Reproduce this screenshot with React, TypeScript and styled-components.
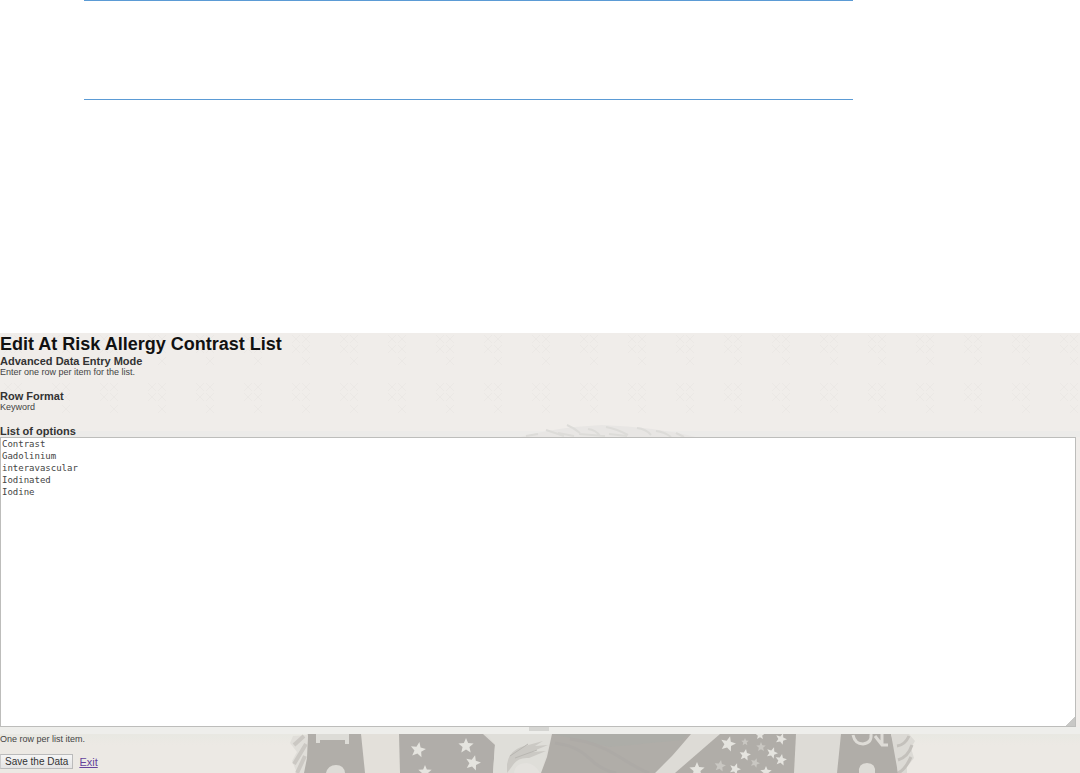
import React from "react";
import styled, { createGlobalStyle } from "styled-components";

const GlobalStyle = createGlobalStyle`
  *, *::before, *::after { box-sizing: border-box; }
  body {
    margin: 0;
    background: #fff;
    color: #222;
    font-family: "Liberation Sans", Arial, sans-serif;
    font-size: 9px;
  }
`;

const Page = styled.div`
  display: flex;
  flex-direction: column;
  min-height: 100vh;
`;

const PageHeader = styled.header`
  height: 100px;
  margin: 0 21% 233px 84px;
  border-top: 1px solid #5b9bd5;
  border-bottom: 1px solid #5b9bd5;
`;

const Editor = styled.form`
  flex: 1;
  display: flex;
  flex-direction: column;
  background: #f0edea;
`;

const Intro = styled.div`
  position: relative;
  overflow: hidden;
  isolation: isolate;
  padding-top: 1px;
`;

const Title = styled.h1`
  margin: 0;
  font-size: 18px;
  line-height: 21px;
  color: #111;
`;

const Section = styled.section`
  margin-bottom: 12px;
`;

const Subtitle = styled.h2`
  margin: 0;
  font-size: 11px;
  line-height: 12px;
  color: #333;
`;

const Label = styled.label`
  display: block;
  font-size: 11px;
  font-weight: bold;
  line-height: 12px;
  color: #333;
`;

const Note = styled.p`
  margin: 0;
  font-size: 9px;
  line-height: 11px;
  color: #444;
`;

const Options = styled.textarea`
  display: block;
  width: calc(100% - 4px);
  height: 290px;
  padding: 0 1px;
  border: 1px solid #bdbdbb;
  border-radius: 0;
  outline: 0;
  background: #fff;
  color: #444;
  font-family: "DejaVu Sans Mono", monospace;
  font-size: 9px;
  line-height: 12px;
  resize: vertical;

  &::-webkit-resizer {
    background: linear-gradient(135deg, transparent 70%, #c8c8c6 70%);
  }
`;

const Footer = styled.footer`
  position: relative;
  overflow: hidden;
  isolation: isolate;
  flex: 1;
  min-height: 46px;
  padding-top: 7px;
  background: linear-gradient(#eeeeeb 0 7px, #e8e8e2 7px, #ece9e4 18px);
`;

const Actions = styled.div`
  display: flex;
  align-items: center;
  gap: 6px;
  margin-top: 9px;
`;

const SaveButton = styled.button`
  height: 15px;
  padding: 0 4px;
  border: 1px solid #bbb;
  border-left-color: #ccc;
  background: linear-gradient(#f5f5f5, #e4e4e4);
  color: #333;
  font: 10px/12px "Liberation Sans", Arial, sans-serif;
`;

const ExitLink = styled.a`
  color: #65439b;
  font-size: 11px;
  line-height: 12px;
`;

const SealArt = styled.svg<{ $edge: "top" | "bottom" }>`
  position: absolute;
  z-index: -1;
  left: 0;
  ${({ $edge }) => ($edge === "top" ? "bottom: 0;" : "top: 0;")}
  pointer-events: none;
`;

const stars = [
  [418, 750, 8, 10], [466, 746, 8, 0], [473, 763, 8, 15], [425, 772, 7, 0],
  [728, 744, 8, 15], [745, 755, 6, 10], [697, 770, 8, 0], [735, 769, 6, 20],
  [772, 753, 6, 20], [781, 739, 6, 20], [760, 735, 5, 0], [781, 760, 6, 10],
  [766, 772, 6, 0],
];
const faintStars = [[720, 766, 6, 10], [755, 763, 5, 20], [761, 747, 5, 0], [745, 742, 4, 0]];

function starPoints([cx, cy, size, turn]: number[]) {
  return Array.from({ length: 10 }, (_, i) => {
    const radius = i % 2 ? size * 0.45 : size;
    const angle = ((i * 36 - 90 + turn) * Math.PI) / 180;
    return `${cx + radius * Math.cos(angle)},${cy + radius * Math.sin(angle)}`;
  }).join(" ");
}

function SealCrest() {
  return (
    <SealArt $edge="top" width="100%" height="104" aria-hidden="true">
      <defs>
        <pattern id="weave" width="48" height="48" patternUnits="userSpaceOnUse" x="2" y="0">
          <path
            d="M2 2l8 8M10 2l-8 8M12 2l8 8M20 2l-8 8M2 12l8 8M10 12l-8 8M12 12l8 8M20 12l-8 8M12 24l8 8M20 24l-8 8"
            stroke="#ebe8e5" fill="none"
          />
        </pattern>
      </defs>
      <rect width="100%" height="98" fill="url(#weave)" />
      <rect y="98" width="100%" height="6" fill="#ecebe9" />
      <g transform="translate(0 -333)">
        <path d="M520 437Q548 430 574 427L602 425Q655 427 696 437Z" fill="#e8e6e4" />
        <path
          d="M526 436l12-2M546 430l18 6M567 425q7 3 13 8M588 429q8 1 12 7M606 427q11 2 22 8M637 428q9 1 14 7M656 431q9 1 15 6M676 433l8 4M558 433l16 3M579 434l26 2M609 434l18 2"
          stroke="#dddcd9" strokeWidth="2" fill="none"
        />
      </g>
    </SealArt>
  );
}

function SealBase() {
  return (
    <SealArt $edge="bottom" width="1080" height="46" viewBox="0 727 1080 46" aria-hidden="true">
      <path d="M307 734H891L897 773H304Z" fill="#dddbd6" />
      <path d="M361 734H400L402 773H365Z" fill="#e3e0da" />
      <path d="M308 734H361L365 773H302L306 758Z" fill="#b1aea9" />
      <path d="M316 734H349V744H345V740H320V743H316Z" fill="#dddcd7" />
      <path d="M326 773q2-8 10-8t9 8Z" fill="#dedcd7" />
      <path d="M399 734H483L495 745L493 773H400Z" fill="#b0ada9" />
      <path d="M486 734H552L547 751L541 773H493L495 744Z" fill="#dfded9" />
      <path d="M507 765q1-13 14-18l22-6-8 5 13-1-17 7 15-1-17 7q-11-1-16 7l-6 8Z" fill="#cbc9c4" />
      <path d="M510 756l18-12M515 758l22-8" stroke="#b9b7b2" fill="none" />
      <path d="M514 773q1-10 13-10 8 1 13 10Z" fill="#e4e2de" />
      <path d="M552 734H691L685 741L679 748L672 756L664 764L655 773H541L547 757Z" fill="#b0ada8" />
      <path d="M552 734H687L682 740L610 747Z" fill="#adada8" />
      <path d="M555 743q22 3 34 15t27 15M570 739q26 3 48 17t31 17" stroke="#adaaa6" strokeWidth="3" fill="none" />
      <path d="M720 734H796L794 773H675Z" fill="#b0ada8" />
      <path d="M841 734H891L896 752L898 773H837Z" fill="#b0ada8" />
      <path d="M859 773q-1-10 8-10t8 10Z" fill="#dedcd7" />
      <path d="M853 735q2 9 10 9 9-1 8-10M875 736l7 9h6M882 734v11" fill="none" stroke="#dedcd7" strokeWidth="3" />
      <path d="M293 736L290 743L297 752L292 761L297 773H304L307 758L308 735Z" fill="#e0ded9" />
      <path d="M294 745l10-9M294 764l12-20M297 773l8-17" stroke="#cbc8c3" strokeWidth="4" fill="none" />
      <path d="M891 734H909L915 741L911 748L914 758L907 767V773H898Z" fill="#dcdad5" />
      <path d="M897 746q8-1 12-10M898 760q10-3 14-15M898 773q7-3 13-16" stroke="#c4c1bc" strokeWidth="3" fill="none" />
      {stars.map((star) => (
        <polygon key={star.join()} points={starPoints(star)} fill="#e5e4df" />
      ))}
      {faintStars.map((star) => (
        <polygon key={star.join()} points={starPoints(star)} fill="#c9c7c2" />
      ))}
      <rect y="727" width="1080" height="7" fill="#eeeeeb" />
      <path d="M529 727H549V731H529Z" fill="#d5d5d2" />
    </SealArt>
  );
}

export default function App() {
  return (
    <Page>
      <GlobalStyle />
      <PageHeader />
      <Editor onSubmit={(event) => event.preventDefault()}>
        <Intro>
          <SealCrest />
          <Title>Edit At Risk Allergy Contrast List</Title>
          <Section>
            <Subtitle>Advanced Data Entry Mode</Subtitle>
            <Note>Enter one row per item for the list.</Note>
          </Section>
          <Section>
            <Subtitle>Row Format</Subtitle>
            <Note>Keyword</Note>
          </Section>
          <Label htmlFor="options">List of options</Label>
        </Intro>
        <Options
          id="options"
          spellCheck={false}
          defaultValue={"Contrast\nGadolinium\ninteravascular\nIodinated\nIodine"}
        />
        <Footer>
          <SealBase />
          <Note>One row per list item.</Note>
          <Actions>
            <SaveButton type="submit">Save the Data</SaveButton>
            <ExitLink href="#">Exit</ExitLink>
          </Actions>
        </Footer>
      </Editor>
    </Page>
  );
}
